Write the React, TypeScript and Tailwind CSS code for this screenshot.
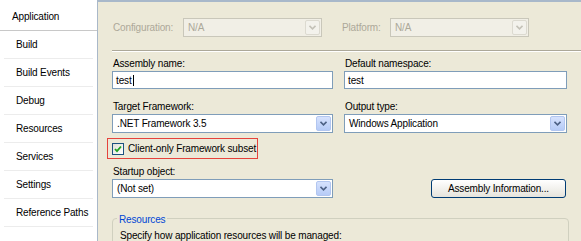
import React from "react"

const tabs = [
  "Application",
  "Build",
  "Build Events",
  "Debug",
  "Resources",
  "Services",
  "Settings",
  "Reference Paths",
]

function Arrow({ disabled }: { disabled?: boolean }) {
  return (
    <div
      className={`flex h-full w-[15px] items-center justify-center rounded-[2px] border ${
        disabled
          ? "border-[#dcdad0] bg-[#f3f2ec]"
          : "border-[#b2c6f0] bg-gradient-to-b from-[#d6e2fd] to-[#b6cbf7]"
      }`}
    >
      <svg width="7" height="5" viewBox="0 0 7 5">
        <path
          d="M0.5 0.8 L3.5 3.8 L6.5 0.8"
          fill="none"
          stroke={disabled ? "#c4c2b8" : "#4d6185"}
          strokeWidth="1.6"
        />
      </svg>
    </div>
  )
}

function Combo({ value, w, disabled }: { value: string; w: string; disabled?: boolean }) {
  return (
    <div
      className={`flex h-[19px] items-stretch border p-px ${w} ${
        disabled ? "border-[#c9c7ba] bg-[#f1efe6]" : "border-[#7f9db9] bg-white"
      }`}
    >
      <div className={`flex-1 pl-[3px] leading-[15px] ${disabled ? "text-[#aca899]" : "text-black"}`}>
        {value}
      </div>
      <Arrow disabled={disabled} />
    </div>
  )
}

function TextBox({ value, caret }: { value: string; caret?: boolean }) {
  return (
    <div className="flex h-[18px] items-center border border-[#7f9db9] bg-white pl-[3px]">
      {value}
      {caret && <span className="ml-px h-[11px] w-px bg-black" />}
    </div>
  )
}

function Label({ children }: { children: React.ReactNode }) {
  return <div className="h-[14px] pl-px leading-[13px]">{children}</div>
}

export default function App() {
  return (
    <div className="flex h-[241px] w-[581px] overflow-hidden font-['Liberation_Sans',Arial,sans-serif] text-[10px] tracking-[-0.15px] text-black">
      <div className="w-[98px] shrink-0 border-r border-[#a9b8c9] bg-white pt-[3px]">
        {tabs.map((t, i) => (
          <div
            key={t}
            className={`flex h-[28px] items-center pl-[12px] ${
              i === 0 ? "border-b border-[#c8c8c8] bg-white" : "mx-[4px] border-b border-[#ececec] pl-[8px]"
            }`}
          >
            {t}
          </div>
        ))}
      </div>

      <div className="flex-1 border-t-2 border-[#a8b8ca] bg-[#ece9d8] pt-[16px]">
        <div className="flex h-[19px] items-center pl-[15px] text-[#aca899]">
          <span className="w-[70px]">Configuration:</span>
          <Combo value="N/A" w="w-[139px]" disabled />
          <span className="ml-[20px] w-[48px]">Platform:</span>
          <Combo value="N/A" w="w-[139px]" disabled />
        </div>

        <div className="ml-[14px] mt-[13px] border-t border-b border-t-[#aca899] border-b-white" />

        <div className="grid grid-cols-[221px_223px] gap-x-[11px] pl-[14px] pt-[5px]">
          <div>
            <Label>Assembly name:</Label>
            <TextBox value="test" caret />
          </div>
          <div>
            <Label>Default namespace:</Label>
            <TextBox value="test" />
          </div>

          <div className="mt-[11px]">
            <Label>Target Framework:</Label>
            <Combo value=".NET Framework 3.5" w="w-full" />
          </div>
          <div className="mt-[11px]">
            <Label>Output type:</Label>
            <Combo value="Windows Application" w="w-full" />
          </div>

          <div className="col-span-2 mt-[5px] flex">
            <div className="-ml-[5px] flex h-[21px] w-[151px] items-center border border-[#e5433c] pl-[4px]">
              <div className="flex h-[12px] w-[12px] items-center justify-center border border-[#1c5180] bg-gradient-to-br from-[#e0e0d8] to-white">
                <svg width="8" height="8" viewBox="0 0 8 8">
                  <path d="M1 4 L3 6.2 L7 1.5" fill="none" stroke="#21a121" strokeWidth="1.8" />
                </svg>
              </div>
              <span className="ml-[4px]">Client-only Framework subset</span>
            </div>
          </div>

          <div className="mt-[6px]">
            <Label>Startup object:</Label>
            <Combo value="(Not set)" w="w-full" />
          </div>
          <div className="mt-[6px] flex items-end justify-end pr-[1px]">
            <div className="flex h-[19px] w-[135px] items-center justify-center rounded-[3px] border border-[#003c74] bg-gradient-to-b from-white to-[#e6e4dc]">
              Assembly Information...
            </div>
          </div>

          <div className="relative col-span-2 mt-[20px] h-[40px] w-[457px] rounded-[4px] border border-[#d0d0bf] pl-[7px] pt-[9px]">
            <span className="absolute -top-[7px] left-[4px] bg-[#ece9d8] px-[2px] text-[#0046d5]">Resources</span>
            Specify how application resources will be managed:
          </div>
        </div>
      </div>
    </div>
  )
}
